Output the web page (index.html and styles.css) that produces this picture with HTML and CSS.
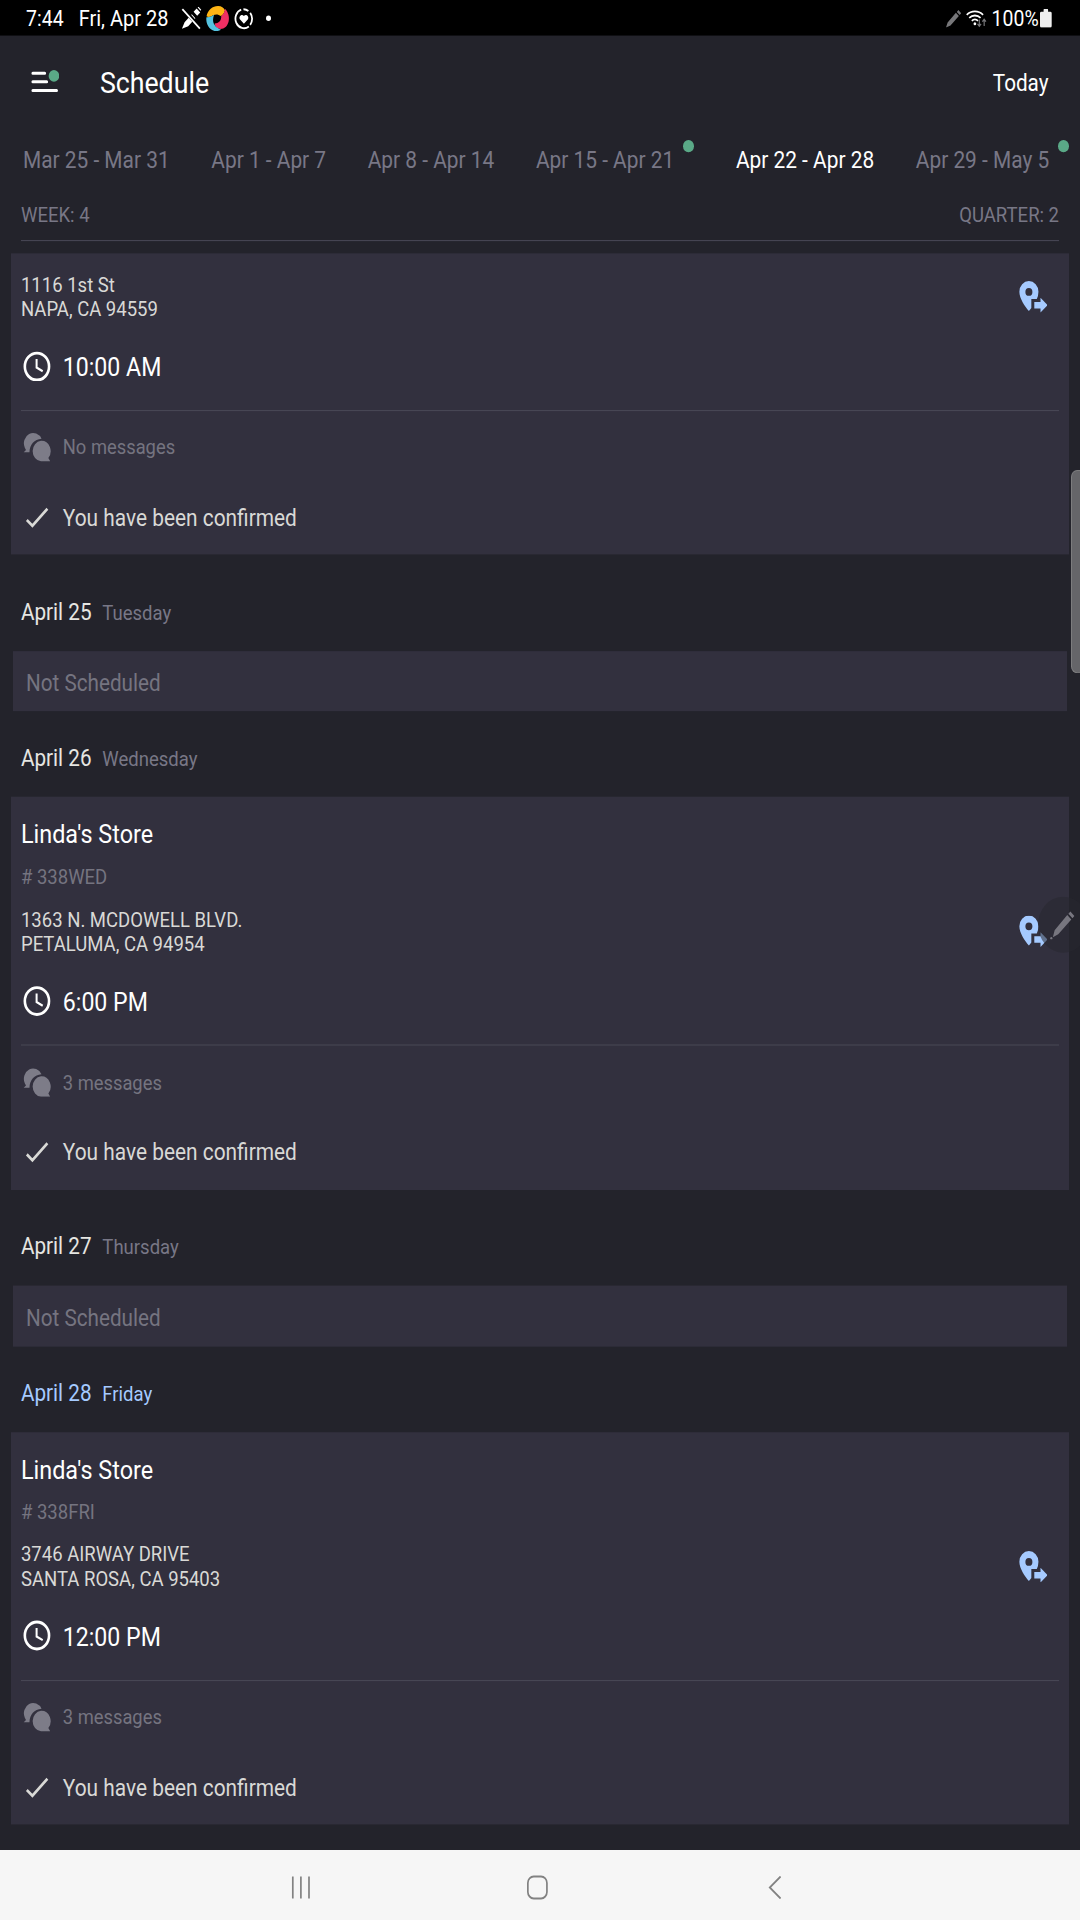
FILE: index.html
```html
<!DOCTYPE html>
<html lang="en">
<head>
<meta charset="utf-8">
<title>Schedule</title>
<link rel="stylesheet" href="styles.css">
</head>
<body>
<svg class="defs" aria-hidden="true">
  <symbol id="clock" viewBox="0 0 32 32">
    <circle cx="16" cy="16" r="13.9" fill="none" stroke="currentColor" stroke-width="3"/>
    <path d="M15.6 8.2v8.8l7 3.8" fill="none" stroke="currentColor" stroke-width="2.3"/>
  </symbol>
  <symbol id="chat" viewBox="0 0 31 30">
    <path d="M20.6 7.2A10.3 10.3 0 1 0 2 16.2L3.3 18.3 0.8 20.6H7.2C7.4 13 12.6 7.6 20.6 7.2z" fill="currentColor"/>
    <path d="M20 9.2a10.3 10.3 0 0 0 0 20.5h10.2l-2-3.4A10.3 10.3 0 0 0 20 9.2z" fill="currentColor"/>
  </symbol>
  <symbol id="check" viewBox="0 0 32 32">
    <path d="M4.4 18.3l6.4 6L28 6.7" fill="none" stroke="currentColor" stroke-width="2.9"/>
  </symbol>
  <symbol id="pin" viewBox="0 0 32 32">
    <path fill="currentColor" fill-rule="evenodd" d="M11 0A10.6 10.6 0 0 0 .4 10.6C.4 17.5 6.600 25 11 30c1-1.100 1.800-1.900 2.700-3.100V17.900h6.100A16 16 0 0 0 21.600 10.600 10.600 10.600 0 0 0 11 0zm0 6.900a3.900 3.900 0 1 1 0 7.800 3.900 3.900 0 0 1 0-7.800z"/>
    <path fill="currentColor" d="M17 20.800h6.900v-4.200l7.800 7.400-7.800 7.500v-4.200H17z"/>
  </symbol>
</svg>
<div class="screen">
  <div class="status">
    <span class="status-time">7:44</span>
    <span class="status-date">Fri, Apr 28</span>
    <svg class="ic-pen-off" width="23" height="23" viewBox="0 0 23 23" fill="#fff">
      <path d="M1 22l3-6.500 8-8 4 4-8 8zM14 5.200l3.400-3.400 4 4L18 9.200zM18.500.8l1-.8 3 3-.8 1z"/>
      <path d="M2 1.500l19.500 20" stroke="#000" stroke-width="4"/>
      <path d="M1.500 2.500L21 22" stroke="#fff" stroke-width="2"/>
    </svg>
    <svg class="ic-swirl" width="26" height="26" viewBox="0 0 26 26">
      <path d="M.6 10.800C2 4 7.500.3 13.500.4c3.800.1 6.200 1.700 7.600 4.400-.8 3-2.600 5.200-4.600 5.700C13 8 8.500 8.600 5.500 11c-1.600.6-3.500.5-4.900-.2z" fill="#fdb414"/>
      <path d="M21 3.200c4 3.500 5.200 8.300 4.200 12.600-1.400 5.700-5.800 8.200-10.400 7.500-3-.5-4.800-2.500-5.200-5.300 4.500-.2 7.600-2.700 7.300-7.500 2.300-1.300 3.900-3.800 4.100-7.300z" fill="#ee2f63"/>
      <path d="M.5 11.600c3.300.2 6-.9 8.500-2.500-1.700 4-1.500 7.400.5 10.200 1.600 2.400 4 3.900 7.200 4.900C11.500 27 5.500 25.500 2.500 20.800.6 17.800 0 14.800.5 11.600z" fill="#55c3e0"/>
    </svg>
    <svg class="ic-heart" width="22" height="22" viewBox="0 0 22 22">
      <path d="M8 1.900A9.500 9.500 0 1 0 16.500 18.700M10.500 1.500a9.500 9.500 0 0 1 5.500 1.700M18 5a9.500 9.500 0 0 1 0 12" fill="none" stroke="#fff" stroke-width="2"/>
      <path d="M11 16L6.500 11.400C4.800 9 8.500 5.400 11 8.300c2.500-2.900 6.200.7 4.500 3.100z" fill="#fff"/>
    </svg>
    <i class="status-dot"></i>
    <div class="status-right">
      <svg width="17" height="18" viewBox="0 0 17 18" fill="#77777a">
        <path d="M0 17.500l1.800-5L11 2.800l3.300 3.300L5 15.600zM12 1.900L13.800 0l3.200 3.300-1.800 1.800z"/>
      </svg>
      <svg class="ic-wifi" width="23" height="19" viewBox="0 0 23 19" fill="none" stroke="#fff" stroke-width="1.900">
        <path d="M.8 6A13.500 13.500 0 0 1 19 6M3.600 9a9.400 9.400 0 0 1 12.600 0M6.500 12a5 5 0 0 1 6.800 0"/>
        <circle cx="9.900" cy="14.800" r="1.500" fill="#fff" stroke="none"/>
        <path d="M14.800 10.500v6.500m-2-2l2 2.300 2-2.300M20.200 17v-6.500m-2 2.200l2-2.300 2 2.300" stroke="#77777a" stroke-width="1.300"/>
      </svg>
      <span class="status-pct">100%</span>
      <svg class="ic-batt" width="13" height="19" viewBox="0 0 13 19" fill="#efefef">
        <path d="M4 1q0-1 1-1h3q1 0 1 1v1.800h2.500q1.500 0 1.500 1.500v12.700q0 1.500-1.500 1.500h-10Q0 18.500 0 17V4.300q0-1.500 1.500-1.500H4z"/>
      </svg>
    </div>
  </div>

  <header class="appbar">
    <svg class="menu" width="32" height="25" viewBox="0 0 32 25">
      <path d="M2 4.300h13.300M2 12.800h15.500M2 21.500h26.500" stroke="#fff" stroke-width="3" stroke-linecap="round"/>
      <circle cx="25.500" cy="7" r="5.900" fill="#5aa987"/>
    </svg>
    <h1>Schedule</h1>
    <span class="today">Today</span>
  </header>

  <nav class="tabs">
    <span>Mar 25 - Mar 31</span>
    <span>Apr 1 - Apr 7</span>
    <span>Apr 8 - Apr 14</span>
    <span class="has-dot">Apr 15 - Apr 21</span>
    <span class="active">Apr 22 - Apr 28</span>
    <span class="has-dot">Apr 29 - May 5</span>
  </nav>

  <div class="period"><span>WEEK: 4</span><span>QUARTER: 2</span></div>

  <main class="list">
    <section class="card continued">
      <div class="place"><p>1116 1st St<br>NAPA, CA 94559</p><svg class="pin"><use href="#pin"/></svg></div>
      <div class="row time"><svg><use href="#clock"/></svg><span>10:00 AM</span></div>
      <div class="row messages"><svg><use href="#chat"/></svg><span>No messages</span></div>
      <div class="row confirmed"><svg><use href="#check"/></svg><span>You have been confirmed</span></div>
    </section>

    <h2 class="day">April 25<small>Tuesday</small></h2>
    <div class="empty">Not Scheduled</div>

    <h2 class="day">April 26<small>Wednesday</small></h2>
    <section class="card">
      <h3>Linda's Store</h3>
      <div class="number"># 338WED</div>
      <div class="place"><p>1363 N. MCDOWELL BLVD.<br>PETALUMA, CA 94954</p><svg class="pin"><use href="#pin"/></svg></div>
      <div class="row time"><svg><use href="#clock"/></svg><span>6:00 PM</span></div>
      <div class="row messages"><svg><use href="#chat"/></svg><span>3 messages</span></div>
      <div class="row confirmed"><svg><use href="#check"/></svg><span>You have been confirmed</span></div>
    </section>

    <h2 class="day">April 27<small>Thursday</small></h2>
    <div class="empty">Not Scheduled</div>

    <h2 class="day current">April 28<small>Friday</small></h2>
    <section class="card">
      <h3>Linda's Store</h3>
      <div class="number"># 338FRI</div>
      <div class="place"><p>3746 AIRWAY DRIVE<br>SANTA ROSA, CA 95403</p><svg class="pin"><use href="#pin"/></svg></div>
      <div class="row time"><svg><use href="#clock"/></svg><span>12:00 PM</span></div>
      <div class="row messages"><svg><use href="#chat"/></svg><span>3 messages</span></div>
      <div class="row confirmed"><svg><use href="#check"/></svg><span>You have been confirmed</span></div>
    </section>
  </main>

  <footer class="sysnav">
    <svg width="22" height="26" viewBox="0 0 22 26"><path d="M2 2v22M11 2v22M20 2v22"/></svg>
    <svg width="24" height="26" viewBox="0 0 24 26"><rect x="0.950" y="2" width="21.200" height="22" rx="6.500"/></svg>
    <svg width="16" height="26" viewBox="0 0 16 26"><path d="M14 2L2 13l12 11"/></svg>
  </footer>

  <div class="scroll-thumb"></div>
  <svg class="air-pen" viewBox="0 0 47 56">
    <path d="M47 7.400A28 28 0 1 0 47 48.600z" fill="#28282f" fill-opacity=".55"/>
    <g transform="translate(13 14)" fill="#77767f">
      <path d="M3.500 26.500l2-7L19.500 4.300l4.500 4.500L9.500 23.500zM20.800 3L23 .8l4.400 4.600L25.300 7.500z"/>
      <circle cx="1.800" cy="27.500" r="1.200"/>
    </g>
  </svg>
</div>
</body>
</html>
```
FILE: styles.css
```css
* { box-sizing: border-box; }

html, body { margin: 0; padding: 0; background: #23232b; }

html { overflow: hidden; }

body { width: 1080px; height: 1920px; overflow: hidden; position: relative; }

.defs { position: absolute; width: 0; height: 0; }

/* The tablet's 1200px wide layout, fitted to a 1080px window at full height */
.screen {
  position: relative;
  display: flex;
  flex-direction: column;
  width: 1200px;
  height: 1920px;
  overflow: hidden;
  zoom: .9;
  transform: scaleY(1.111111);
  transform-origin: 0 0;
  background: #23232b;
  color: #fff;
  font: 400 23px/1.2 Roboto, sans-serif;
}

h1, h2, h3, p { margin: 0; font-weight: 400; }
svg { display: block; flex: none; }

/* system status bar */
.status {
  display: flex;
  align-items: center;
  height: 35px;
  padding: 2px 31px 0 29px;
  background: #000;
  font-size: 21.600px;
}
.status-date { margin-left: 16.800px; font-size: 22.200px; }
.ic-pen-off { margin-left: 14px; }
.ic-swirl { margin-left: 5px; }
.ic-heart { margin-left: 5px; }
.status-dot { width: 6px; height: 6px; margin-left: 13px; border-radius: 50%; background: #fff; }
.status-right { display: flex; align-items: center; margin-left: auto; }
.ic-wifi { margin-left: 6px; }
.status-pct { margin-left: 5px; }
.ic-batt { margin-left: 2px; }

/* title bar */
.appbar { display: flex; align-items: center; height: 96px; padding: 0 35px 0 34px; }
.menu { margin-top: -3px; }
.appbar h1 { margin-left: 45px; font-size: 29.700px; }
.today { margin-left: auto; padding-top: 2px; }

/* week tabs */
.tabs { display: flex; align-items: center; gap: 46.300px; height: 57px; padding: 1.500px 0 0 25.500px; color: #787786; font-size: 23.200px; white-space: nowrap; }
.tabs .active { color: #fff; }
.tabs .has-dot { display: flex; align-items: center; gap: 10.300px; }
.tabs .has-dot::after { content: ""; width: 12px; height: 12px; margin-top: -28.500px; border-radius: 50%; background: #5aa987; }

.period {
  display: flex;
  justify-content: space-between;
  align-items: center;
  height: 53px;
  margin: 0 23.300px;
  padding-top: 4px;
  border-bottom: 1px solid #454452;
  color: #787786;
  font-size: 20.600px;
}

/* agenda */
.list { flex: 1; padding-top: 12.300px; }

.card { margin: 0 12px 11px; padding: 15.700px 11.300px 3.300px; background: #32303e; }
.card.continued { padding-top: 10.400px; }
.card h3 { height: 44px; font-size: 26px; line-height: 45px; }
.number { height: 42px; line-height: 43px; font-size: 20.600px; color: #757480; }

.place { display: flex; justify-content: space-between; align-items: center; padding: 9.300px 13px 0 0; color: #d9d9d6; }
.place p { font-size: 20.600px; line-height: 24px; height: 48px; padding-top: 1px; }
.pin { width: 32px; height: 32px; color: #a5caff; }

.row { display: flex; align-items: center; }
.row svg { width: 31px; height: 31px; margin: 0 13.500px 0 2px; }

.time { height: 90.200px; padding: 27.200px 0 23px; border-bottom: 1px solid #474654; font-size: 25.700px; }
.time svg { margin-top: -3px; }
.time span { padding-top: 1px; }
.messages { height: 72.200px; font-size: 20.400px; color: #757480; }
.messages svg { color: #7d7c88; margin-top: -1px; }
.messages span { padding-top: 2px; }
.confirmed { height: 68px; color: #d9d9d6; font-size: 23.200px; }
.confirmed svg { margin-top: 1px; }
.confirmed span { padding-top: 2px; }

.day { display: flex; align-items: baseline; height: 85.300px; padding: 0 23.300px; font-size: 23px; line-height: 94px; color: #e6e6e2; }
.day small { margin-left: 12px; font-size: 20.600px; color: #787786; }
.day.current, .day.current small { color: #a5caff; }

.empty { height: 60.700px; margin: 0 14.400px; padding-left: 14.500px; background: #32303e; color: #757480; line-height: 66px; }

/* system navigation */
.sysnav { display: flex; align-items: center; height: 70px; padding: 5px 331px 0 323px; justify-content: space-between; background: #f6f6f6; }
.sysnav svg { fill: none; stroke: #828282; stroke-width: 1.900; }
.sysnav svg:nth-child(2) { margin-right: 2px; }

/* overlays */
.scroll-thumb { position: absolute; right: 0; top: 470px; width: 10px; height: 203px; border: 1px solid #7c7c7e; border-right: 0; border-radius: 7px 0 0 7px; background: #656569; }
.air-pen { position: absolute; right: 0; top: 897px; width: 47px; height: 56px; }
```
